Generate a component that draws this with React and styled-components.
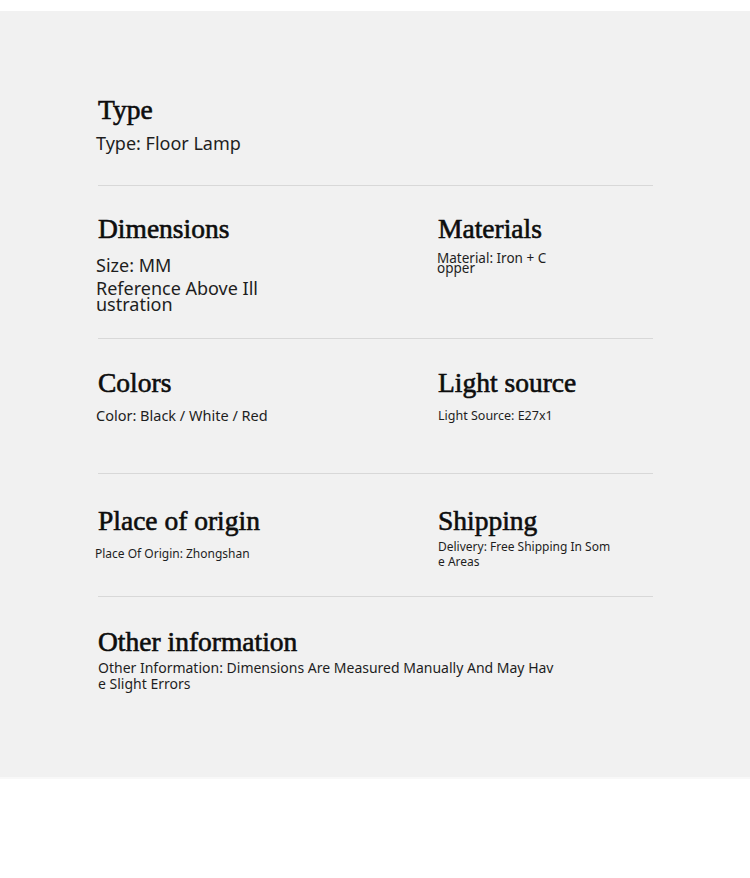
import React from 'react';
import styled, { createGlobalStyle } from 'styled-components';

const GlobalStyle = createGlobalStyle`
	body {
		margin: 0;
		background: #fff;
	}
`;

const specs = [
	{
		top: 1,
		bottom: 31,
		left: {
			title: 'Type',
			lines: [{ text: 'Type: Floor Lamp', size: 18, lh: 22, shift: -2, gap: 6 }],
		},
	},
	{
		top: 27,
		bottom: 26,
		left: {
			title: 'Dimensions',
			lines: [
				{ text: 'Size: MM', size: 18, lh: 22, shift: -2, gap: 9 },
				{ text: 'Reference Above Illustration', size: 18, lh: 16, shift: -2, gap: 4, width: 166 },
			],
		},
		right: {
			title: 'Materials',
			lines: [{ text: 'Material: Iron + Copper', size: 13.5, lh: 10, shift: -1, gap: 8, width: 110 }],
		},
	},
	{
		top: 28,
		bottom: 47,
		left: {
			title: 'Colors',
			lines: [{ text: 'Color: Black / White / Red', size: 14.5, lh: 20, shift: -2, gap: 6 }],
		},
		right: {
			title: 'Light source',
			lines: [{ text: 'Light Source: E27x1', size: 12.5, lh: 20, shift: 0, gap: 7 }],
		},
	},
	{
		top: 31,
		bottom: 27,
		left: {
			title: 'Place of origin',
			lines: [{ text: 'Place Of Origin: Zhongshan', size: 12, lh: 20, shift: -3, gap: 7 }],
		},
		right: {
			title: 'Shipping',
			lines: [{ text: 'Delivery: Free Shipping In Some Areas', size: 12, lh: 15, shift: 0, gap: 2, width: 176 }],
		},
	},
	{
		top: 29,
		bottom: 0,
		wide: true,
		left: {
			title: 'Other information',
			lines: [
				{
					text: 'Other Information: Dimensions Are Measured Manually And May Have Slight Errors',
					size: 14,
					lh: 16,
					shift: 0,
					gap: 2,
					width: 458,
				},
			],
		},
	},
];

export default function App() {
	return (
		<>
			<GlobalStyle />
			<Panel>
				<Content>
					{specs.map((row, i) => (
						<Row key={i} wide={row.wide} last={i === specs.length - 1} top={row.top} bottom={row.bottom}>
							<Cell spec={row.left} />
							{row.right && <Cell spec={row.right} />}
						</Row>
					))}
				</Content>
			</Panel>
		</>
	);
}

function Cell({ spec }) {
	return (
		<div>
			<Heading>{spec.title}</Heading>
			{spec.lines.map((l, i) => (
				<Value key={i} size={l.size} lh={l.lh} shift={l.shift} gap={l.gap} width={l.width}>
					{l.text}
				</Value>
			))}
		</div>
	);
}

const Panel = styled.section`
	margin-top: 11px;
	background: #f1f1f1;
	padding-top: 82px;
	height: 768px;
	box-sizing: border-box;
	border-bottom: 2px solid #f8f8f8;
`;

const Content = styled.div`
	margin-left: 98px;
	width: 555px;
`;

const Row = styled.div`
	display: grid;
	grid-template-columns: ${(p) => (p.wide ? '1fr' : '340px 1fr')};
	padding-top: ${(p) => p.top}px;
	padding-bottom: ${(p) => p.bottom}px;
	border-bottom: ${(p) => (p.last ? 'none' : '1px solid #d8d8d8')};
`;

const Heading = styled.h3`
	margin: 0;
	font-family: 'Liberation Serif', 'Times New Roman', serif;
	font-weight: 400;
	font-size: 27.5px;
	line-height: 32px;
	color: #0d0d0d;
	-webkit-text-stroke: 0.6px #0d0d0d;
`;

const Value = styled.p`
	margin: ${(p) => p.gap}px 0 0 ${(p) => p.shift}px;
	width: ${(p) => (p.width ? `${p.width}px` : 'auto')};
	font-family: 'Noto Sans', 'Open Sans', sans-serif;
	font-size: ${(p) => p.size}px;
	line-height: ${(p) => p.lh}px;
	color: #1e1e1e;
	word-break: break-all;
`;
